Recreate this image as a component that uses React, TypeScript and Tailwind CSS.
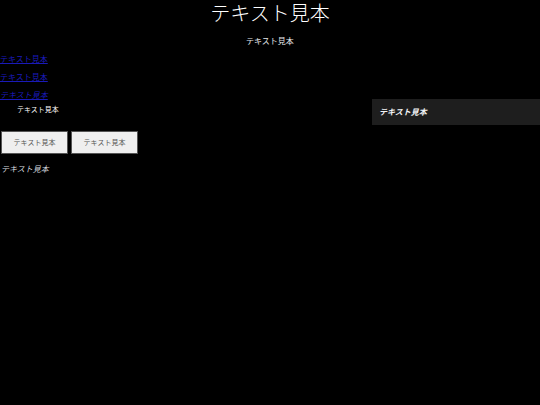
const jp = { fontFamily: '"Noto Sans CJK JP", "Noto Sans", sans-serif' };

export default function App() {
  return (
    <div className="min-h-[405px] w-[540px] bg-black text-white" style={jp}>
      <h1 className="text-center text-[20px] font-extralight leading-[26px]">テキスト見本</h1>
      <p className="mt-[10px] text-center text-[8px] leading-[10px] text-gray-200">テキスト見本</p>
      <div className="mt-[8px] flex">
        <div className="flex-1">
          <div className="flex flex-col gap-[8px]">
            <a href="#" className="text-[8px] leading-[10px] text-[#1a1ab8] underline">テキスト見本</a>
            <a href="#" className="text-[8px] leading-[10px] text-[#1a1ab8] underline">テキスト見本</a>
            <a href="#" className="text-[8px] leading-[10px] text-[#1a1ab8] underline italic">テキスト見本</a>
          </div>
          <p className="mt-[4px] pl-[17px] text-[7px] leading-[10px]">テキスト見本</p>
          <div className="mt-[17px] flex gap-[3px] pl-[1px]">
            <button className="h-[23px] w-[67px] border border-[#555] bg-[#efefef] text-[7px] text-[#555]">テキスト見本</button>
            <button className="h-[23px] w-[67px] border border-[#555] bg-[#efefef] text-[7px] text-[#555]">テキスト見本</button>
          </div>
          <p className="mt-[10px] pl-[1px] text-[8px] leading-[10px] italic text-gray-300">テキスト見本</p>
        </div>
        <div className="mt-[45px] h-[26px] w-[168px] self-start bg-[#1e1e1e] pl-[7px] flex items-center">
          <span className="text-[8px] font-bold italic text-gray-100">テキスト見本</span>
        </div>
      </div>
    </div>
  );
}
